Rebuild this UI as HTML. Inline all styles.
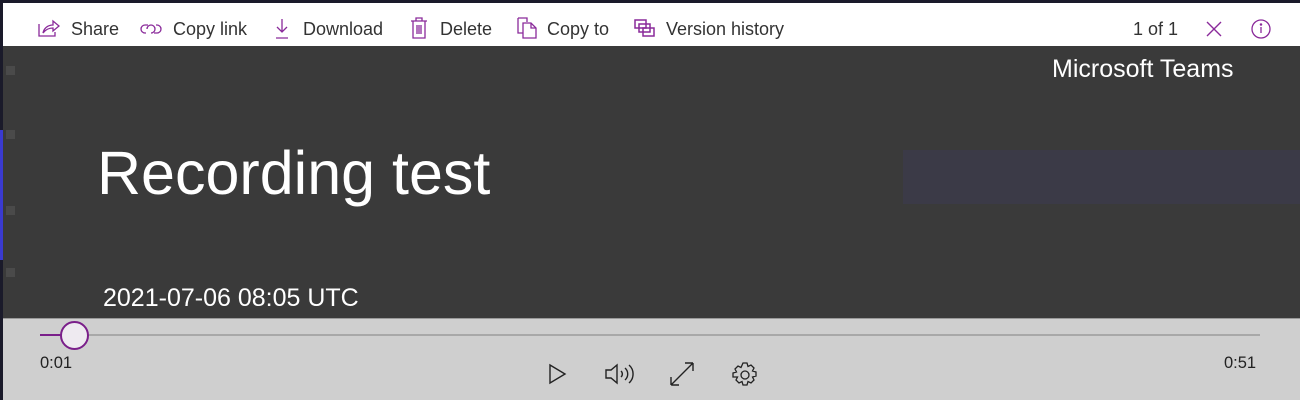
<!DOCTYPE html>
<html><head><style>
*{margin:0;padding:0;box-sizing:border-box}
body{width:1300px;height:400px;overflow:hidden;background:#1a1a2a;font-family:"Liberation Sans",sans-serif;position:relative}
.tb{position:absolute;left:3px;top:3px;width:1297px;height:43px;background:#fff}
.it{position:absolute;top:16px;height:20px;line-height:20px;font-size:18px;color:#333;white-space:nowrap}
.ic{position:absolute}
.vid{position:absolute;left:3px;top:46px;width:1297px;height:272px;background:#3a3a3a}
.ctl{position:absolute;left:3px;top:318px;width:1297px;height:82px;background:#cfcfcf;border-top:1px solid #999}
.t{position:absolute;color:#fff;white-space:nowrap}
</style></head><body>
<div style="position:absolute;left:0;top:130px;width:3px;height:130px;background:#3a3ad0"></div>
<div class="tb">
 <svg class="ic" style="left:35px;top:15px" width="22" height="20" viewBox="0 0 22 20" fill="none" stroke="#8a2a9a" stroke-width="1.3"><path d="M1 6v12h16v-4"/><path d="M5 15c1-5 5-8 10-8V3l6 5-6 5V10c-4 0-7 1-10 5z"/></svg><div class="it" style="left:68px">Share</div>
 <svg class="ic" style="left:137px;top:19px" width="22" height="14" viewBox="0 0 22 14" fill="none" stroke="#8a2a9a" stroke-width="1.3"><path d="M8 3H5a4 4 0 0 0 0 8h1M14 11h3a4 4 0 0 0 0-8h-1"/><path d="M7 7a4 4 0 0 1 4-4h0a4 4 0 0 1 0 8"/></svg><div class="it" style="left:170px">Copy link</div>
 <svg class="ic" style="left:271px;top:15px" width="16" height="21" viewBox="0 0 16 21" fill="none" stroke="#8a2a9a" stroke-width="1.3"><path d="M8 1v13M3 9l5 5 5-5M2 20h12"/></svg><div class="it" style="left:300px">Download</div>
 <svg class="ic" style="left:407px;top:14px" width="18" height="22" viewBox="0 0 18 22" fill="none" stroke="#8a2a9a" stroke-width="1.3"><path d="M1 4h16M6 4V1h6v3M3 4v17h12V4M7 8v9M9 8v9M11 8v9"/></svg><div class="it" style="left:437px">Delete</div>
 <svg class="ic" style="left:514px;top:14px" width="20" height="22" viewBox="0 0 20 22" fill="none" stroke="#8a2a9a" stroke-width="1.3"><path d="M1 1h9v4M1 1v15h5"/><path d="M6 6h8l5 5v10H6z"/><path d="M14 6v5h5"/></svg><div class="it" style="left:544px">Copy to</div>
 <svg class="ic" style="left:631px;top:16px" width="22" height="18" viewBox="0 0 22 18" fill="none" stroke="#8a2a9a" stroke-width="1.5"><rect x="1" y="1" width="11" height="8"/><rect x="5" y="5" width="11" height="8"/><rect x="9" y="9" width="11" height="8"/></svg><div class="it" style="left:663px">Version history</div>
 <div class="it" style="left:1130px">1 of 1</div>
 <svg class="ic" style="left:1203px;top:18px" width="16" height="16" viewBox="0 0 16 16" stroke="#8a2a9a" stroke-width="1.4"><path d="M1 1l14 14M15 1L1 15"/></svg>
 <svg class="ic" style="left:1248px;top:16px" width="20" height="20" viewBox="0 0 20 20" fill="none" stroke="#8a2a9a" stroke-width="1.3"><circle cx="10" cy="10" r="9"/><path d="M10 8v6"/><circle cx="10" cy="5.5" r=".6" fill="#8a2a9a"/></svg>
</div>
<div class="vid">
 <div style="position:absolute;left:900px;top:104px;width:397px;height:54px;background:#3b3a47"></div>
 <div style="position:absolute;left:3px;top:20px;width:9px;height:9px;background:#4a4a4a"></div>
 <div style="position:absolute;left:3px;top:84px;width:9px;height:9px;background:#4a4a4a"></div>
 <div style="position:absolute;left:3px;top:160px;width:9px;height:9px;background:#4a4a4a"></div>
 <div style="position:absolute;left:3px;top:222px;width:9px;height:9px;background:#4a4a4a"></div>
 <div class="t" style="left:1049px;top:9px;font-size:25px">Microsoft Teams</div>
 <div class="t" style="left:94px;top:92px;font-size:61px">Recording test</div>
 <div class="t" style="left:100px;top:238px;font-size:25px">2021-07-06 08:05 UTC</div>
</div>
<div class="ctl">
 <div style="position:absolute;left:37px;top:15px;width:1220px;height:2px;background:#a8a8a8"></div>
 <div style="position:absolute;left:37px;top:15px;width:30px;height:2px;background:#7a1f8a"></div>
 <div style="position:absolute;left:57px;top:2px;width:29px;height:29px;border-radius:50%;background:#eeeaf0;border:2.5px solid #7a1f8a"></div>
 <div style="position:absolute;left:37px;top:35px;font-size:16.5px;color:#222">0:01</div>
 <div style="position:absolute;left:1221px;top:35px;font-size:16.5px;color:#222">0:51</div>
 <svg style="position:absolute;left:545px;top:44px" width="20" height="22" viewBox="0 0 20 22" fill="none" stroke="#222" stroke-width="1.4"><path d="M2 2l15 9-15 9z"/></svg>
 <svg style="position:absolute;left:601px;top:44px" width="32" height="22" viewBox="0 0 32 22" fill="none" stroke="#222" stroke-width="1.4"><path d="M2 7h5l6-5v18l-6-5H2z"/><path d="M17 8a4 4 0 0 1 0 6M21 5a8 8 0 0 1 0 12M25 2a12 12 0 0 1 0 18"/></svg>
 <svg style="position:absolute;left:666px;top:42px" width="26" height="26" viewBox="0 0 26 26" fill="none" stroke="#222" stroke-width="1.4"><path d="M2 24L24 2M2 24v-8M2 24h8M24 2h-8M24 2v8"/></svg>
 <svg style="position:absolute;left:728px;top:42px" width="28" height="28" viewBox="0 0 28 28" fill="none" stroke="#222" stroke-width="1.3"><path d="M12 2h4l1 3.5 3-1.5 3 3-1.5 3 3.5 1v4l-3.5 1 1.5 3-3 3-3-1.5-1 3.5h-4l-1-3.5-3 1.5-3-3 1.5-3L2 16v-4l3.5-1L4 8l3-3 3 1.5z"/><circle cx="14" cy="14" r="4"/></svg>
</div>
</body></html>
